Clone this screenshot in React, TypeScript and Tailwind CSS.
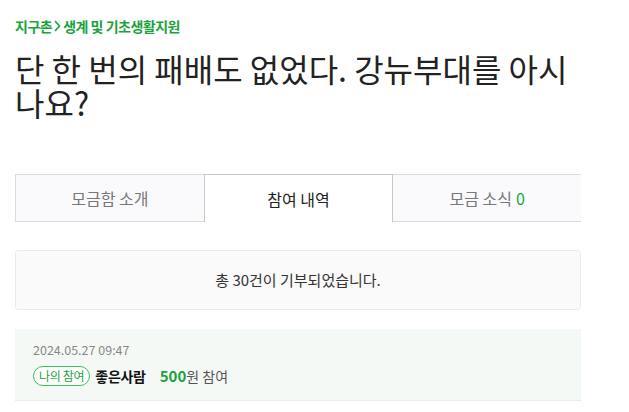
import * as React from "react"

const font = { fontFamily: '"Noto Sans CJK KR", "Noto Sans", sans-serif' }

const Tabs: React.FC = () => {
  return (
    <div className="flex h-[48px] text-[16px]">
      <div className="flex flex-1 items-center justify-center border border-r-0 border-[#dcdcdc] bg-[#fafafc] text-[#777]">
        모금함 소개
      </div>
      <div className="flex flex-1 items-center justify-center border border-b-0 border-[#c8c8c8] bg-white text-[#222]">
        참여 내역
      </div>
      <div className="flex flex-1 items-center justify-center border-y border-[#dcdcdc] bg-[#fafafc] text-[#777]">
        모금 소식 <span className="ml-1 text-[#10a83c]">0</span>
      </div>
    </div>
  )
}

export default function App() {
  return (
    <div className="w-[629px] h-[412px] overflow-hidden bg-white" style={font}>
      <div className="w-[566px] ml-[15px] pt-[16px]">
        <div className="flex items-center text-[14px] font-bold text-[#19a33c] leading-[20px] tracking-[-0.5px]">
          지구촌
          <svg width="7" height="12" viewBox="0 0 7 12" className="mx-[2px]">
            <path d="M1 1 L5.5 6 L1 11" fill="none" stroke="#19a33c" strokeWidth="1.6" />
          </svg>
          생계 및 기초생활지원
        </div>
        <h1 className="mt-[15px] text-[32px] leading-[34px] text-[#222] font-normal">
          단 한 번의 패배도 없었다. 강뉴부대를 아시나요?
        </h1>
        <div className="mt-[55px]">
          <Tabs />
        </div>
        <div className="mt-[28px] flex h-[60px] items-center justify-center rounded-[3px] border border-[#ebebeb] bg-[#fafafa] text-[15px] text-[#333]">
          총 30건이 기부되었습니다.
        </div>
        <div className="mt-[19px] border-b border-[#eaeaea] bg-[#f5f9f6] px-[18px] pt-[12px] pb-[14px]">
          <div className="text-[12.5px] text-[#888] leading-[18px]">2024.05.27 09:47</div>
          <div className="mt-[7px] flex items-center text-[14px] leading-[20px]">
            <span className="rounded-full border border-[#3cbf5c] bg-white px-[5px] text-[12px] leading-[18px] text-[#19a33c] tracking-[-0.3px]">
              나의 참여
            </span>
            <span className="ml-[5px] font-bold text-[#111] tracking-[-0.3px]">좋은사람</span>
            <span className="ml-[14px] font-bold text-[#19a33c] text-[15px]">500</span>
            <span className="text-[#555]">원 참여</span>
          </div>
        </div>
      </div>
    </div>
  )
}
